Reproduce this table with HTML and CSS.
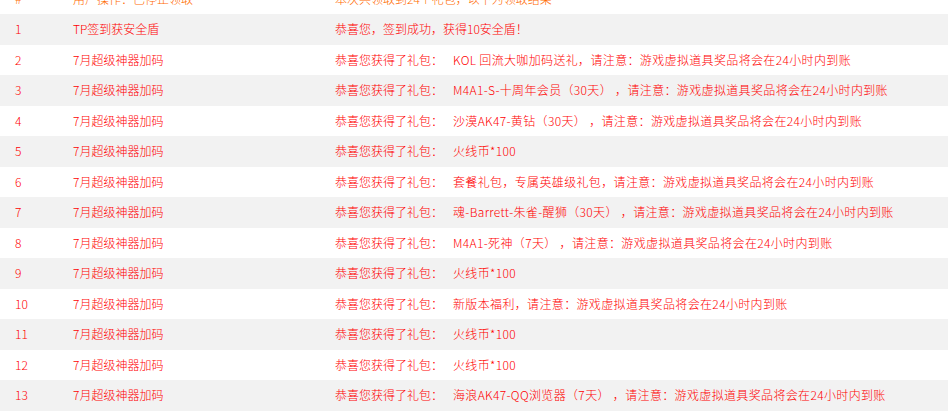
FILE: index.html
```html
<!DOCTYPE html>
<html lang="zh-CN">
<head>
<meta charset="utf-8">
<title>领取结果</title>
<link rel="stylesheet" href="styles.css">
</head>
<body>
<div class="list">
  <div class="row head"><div class="c1">#</div><div class="c2">用户操作：已停止领取</div><div class="c3">本次共领取到24个礼包，以下为领取结果</div></div>
  <div class="row"><div class="c1">1</div><div class="c2">TP签到获安全盾</div><div class="c3">恭喜您，签到成功，获得10安全盾！</div></div>
  <div class="row"><div class="c1">2</div><div class="c2">7月超级神器加码</div><div class="c3">恭喜您获得了礼包：<span class="gift">KOL 回流大咖加码送礼，请注意：游戏虚拟道具奖品将会在24小时内到账</span></div></div>
  <div class="row"><div class="c1">3</div><div class="c2">7月超级神器加码</div><div class="c3">恭喜您获得了礼包：<span class="gift">M4A1-S-十周年会员（30天） ，请注意：游戏虚拟道具奖品将会在24小时内到账</span></div></div>
  <div class="row"><div class="c1">4</div><div class="c2">7月超级神器加码</div><div class="c3">恭喜您获得了礼包：<span class="gift">沙漠AK47-黄钻（30天） ，请注意：游戏虚拟道具奖品将会在24小时内到账</span></div></div>
  <div class="row"><div class="c1">5</div><div class="c2">7月超级神器加码</div><div class="c3">恭喜您获得了礼包：<span class="gift">火线币*100</span></div></div>
  <div class="row"><div class="c1">6</div><div class="c2">7月超级神器加码</div><div class="c3">恭喜您获得了礼包：<span class="gift">套餐礼包，专属英雄级礼包，请注意：游戏虚拟道具奖品将会在24小时内到账</span></div></div>
  <div class="row"><div class="c1">7</div><div class="c2">7月超级神器加码</div><div class="c3">恭喜您获得了礼包：<span class="gift">魂-Barrett-朱雀-醒狮（30天） ，请注意：游戏虚拟道具奖品将会在24小时内到账</span></div></div>
  <div class="row"><div class="c1">8</div><div class="c2">7月超级神器加码</div><div class="c3">恭喜您获得了礼包：<span class="gift">M4A1-死神（7天） ，请注意：游戏虚拟道具奖品将会在24小时内到账</span></div></div>
  <div class="row"><div class="c1">9</div><div class="c2">7月超级神器加码</div><div class="c3">恭喜您获得了礼包：<span class="gift">火线币*100</span></div></div>
  <div class="row"><div class="c1">10</div><div class="c2">7月超级神器加码</div><div class="c3">恭喜您获得了礼包：<span class="gift">新版本福利，请注意：游戏虚拟道具奖品将会在24小时内到账</span></div></div>
  <div class="row"><div class="c1">11</div><div class="c2">7月超级神器加码</div><div class="c3">恭喜您获得了礼包：<span class="gift">火线币*100</span></div></div>
  <div class="row"><div class="c1">12</div><div class="c2">7月超级神器加码</div><div class="c3">恭喜您获得了礼包：<span class="gift">火线币*100</span></div></div>
  <div class="row"><div class="c1">13</div><div class="c2">7月超级神器加码</div><div class="c3">恭喜您获得了礼包：<span class="gift">海浪AK47-QQ浏览器（7天） ，请注意：游戏虚拟道具奖品将会在24小时内到账</span></div></div>
</div>
</body>
</html>
```
FILE: styles.css
```css
html, body {
  margin: 0;
  padding: 0;
  background: #fff;
  overflow: hidden;
}
body {
  font-family: "Noto Sans CJK SC", "Noto Sans", sans-serif;
  font-size: 12px;
  font-weight: 300;
  color: #ff0000;
  text-spacing-trim: space-all;
}
.list {
  margin-top: -16.5px;
}
.row {
  display: grid;
  grid-template-columns: 58px 262px 1fr;
  height: 30.5px;
  align-items: center;
  white-space: nowrap;
}
.row:nth-child(even) {
  background: #f2f2f2;
}
.row > div {
  line-height: 16px;
  padding-left: 15px;
}
.gift {
  margin-left: 10px;
  letter-spacing: 0.35px;
}
.head {
  color: #ff6a00;
}
```
